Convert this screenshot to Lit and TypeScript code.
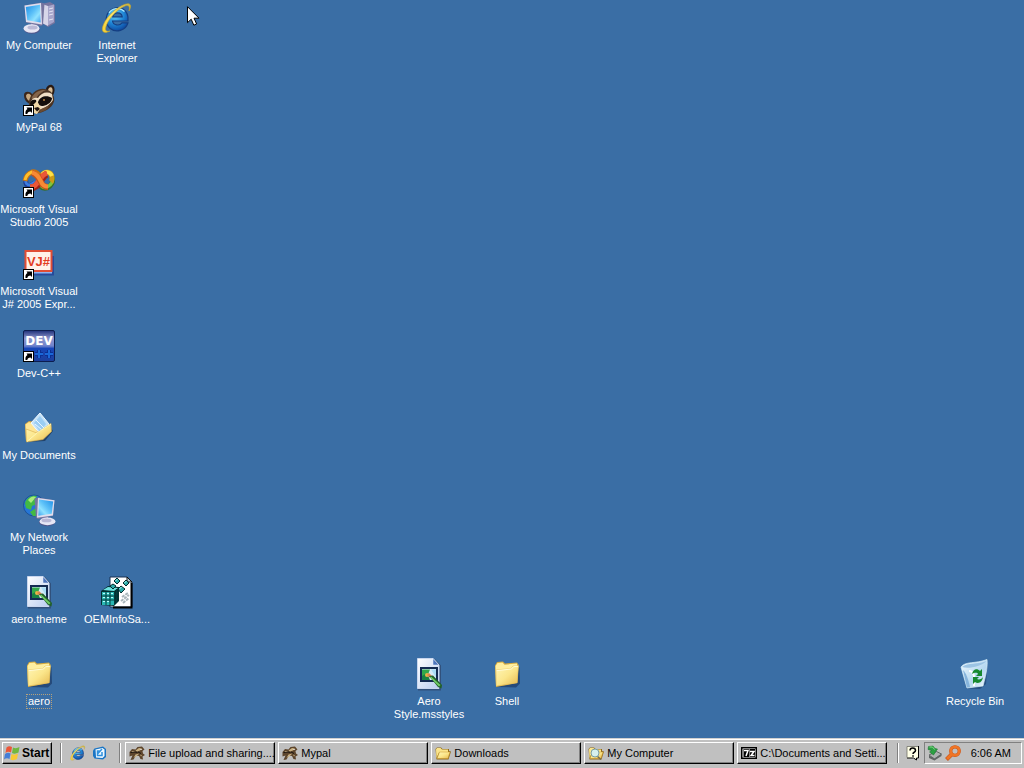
import { LitElement, html, css, svg } from "lit";
import { customElement, property } from "lit/decorators.js";
import { classMap } from "lit/directives/class-map.js";
import { styleMap } from "lit/directives/style-map.js";

const gradients = svg`
  <defs>
    <linearGradient id="screen" x1="0" y1="0" x2="1" y2="1"><stop offset="0" stop-color="#1f8fe6"/><stop offset=".45" stop-color="#5cc0f8"/><stop offset=".7" stop-color="#8fe2ff"/><stop offset="1" stop-color="#3fa2ee"/></linearGradient>
    <linearGradient id="paper" x1="0" y1="0" x2="1" y2="1"><stop offset="0" stop-color="#ffffff"/><stop offset="1" stop-color="#b9cdf0"/></linearGradient>
    <linearGradient id="fold" x1="0" y1="0" x2="1" y2="1"><stop offset="0" stop-color="#fff6b8"/><stop offset=".5" stop-color="#fbe68b"/><stop offset="1" stop-color="#e6b84e"/></linearGradient>
    <radialGradient id="ball" cx=".4" cy=".3" r=".8"><stop offset="0" stop-color="#6fd6fb"/><stop offset=".5" stop-color="#1f86d6"/><stop offset="1" stop-color="#0a3a92"/></radialGradient>
    <linearGradient id="gold" x1="0" y1="1" x2="1" y2="0"><stop offset="0" stop-color="#f6cf2e"/><stop offset=".5" stop-color="#fbe36a"/><stop offset="1" stop-color="#c9b440"/></linearGradient>
    <linearGradient id="navy" x1="0" y1="0" x2="0" y2="1"><stop offset="0" stop-color="#1d2f78"/><stop offset=".25" stop-color="#8d95cc"/><stop offset=".5" stop-color="#6f83cc"/><stop offset=".58" stop-color="#1746b8"/><stop offset="1" stop-color="#1c3f9c"/></linearGradient>
    <linearGradient id="bin" x1="0" y1="0" x2="1" y2="1"><stop offset="0" stop-color="#f2faff"/><stop offset=".6" stop-color="#b5d8f0"/><stop offset="1" stop-color="#f4faff"/></linearGradient>
  </defs>`;

const shortcut = svg`
  <rect x="0.5" y="21.5" width="10" height="10" fill="#fff" stroke="#000"/>
  <path d="M2.500 30c-.3-3 .5-4.300 2-5L3.500 23.500h5.500v5.500L7.500 27.500C5.500 27.600 4.500 28.500 4.300 30z" fill="#000"/>`;

const monitor = svg`
  <path d="M8 21l6 1 1 3-7-1z" fill="#9d9cc4"/>
  <ellipse cx="9" cy="27.500" rx="8" ry="4.300" fill="#51578c"/>
  <ellipse cx="8.500" cy="26.500" rx="8" ry="4.200" fill="#e6e6f4"/>
  <ellipse cx="9.500" cy="25.500" rx="5" ry="2" fill="#b9b8d6"/>
  <path d="M1.500 3.500L18 .500l3.500 1-1.500 21-2 1.500L3 20.500z" fill="#75749f"/>
  <path d="M1.500 3.500L18 1l1 21.500L3 20z" fill="#dedded"/>
  <path d="M2.800 5L17 2.800l.7 17.600L4.300 18.200z" fill="url(#screen)"/>`;

const computer = svg`
  <path d="M19 2l8-2 5 3v18l-7 4-6-4z" fill="#77759f"/><path d="M19 2l6 2v20l-6-3z" fill="#d7d6e9"/>
  <path d="M25 4l6-1.500V20l-6 3.500z" fill="#a8a6cb"/><path d="M26 7l4-1M26 10l4-1M26 13l4-1M26 18l4-1" stroke="#e4e4f2"/>
  ${monitor}`;

const themeFile = svg`
  <path d="M5 31.500h22V8l-6-6.500" fill="none" stroke="#31517c" stroke-width="2"/>
  <path d="M4.500.5h15.500l6 6.500v23.500H4.500z" fill="url(#paper)" stroke="#c9d6ee"/>
  <path d="M20 .5v6.500h6z" fill="#4c74bc" stroke="#e9f0fc" stroke-width=".5"/>
  <rect x="8" y="10" width="16" height="13" fill="#d5eaf6" stroke="#142b52" stroke-width="2"/>
  <path d="M9 11.500h8l-4 10H9z" fill="#32a84a"/><path d="M9 18l5-3 3 7H9z" fill="#198142"/>
  <path d="M18 11.500h5v8z" fill="#a9dcf5"/>
  <circle cx="14" cy="17" r="2" fill="#eab447"/><path d="M14 17l2-2 3 3-2 2z" fill="#e0844a"/>
  <path d="M16 18l4-.500 9 9.500-.5 3.500L25 29z" fill="#225f2b"/><path d="M18 18.500l9.500 8.500-1.500 1.500L17 19.500z" fill="#70cc65"/>`;

const folder = svg`
  <path d="M5 29l20 .5 4-4L28.500 9z" fill="#1a3863" opacity=".65"/>
  <path d="M4 7.500L6 4l6-.5 2 2L26 4.500l1.500 2-1 18.500L5 29z" fill="#d5a93e"/>
  <path d="M4.500 8L6.500 5l5-.5 2 2.200L26 5.500v13L5 28z" fill="#ffefa0"/>
  <path d="M5 12l15-1.500 2-2.500 5.500-.3-1.500 17L5.500 28z" fill="url(#fold)" stroke="#e6c464" stroke-width=".6"/>
  <path d="M5.500 12.700L20.500 11l2-2.300L27 8.300" fill="none" stroke="#fffbd7"/>`;

const smallFolder = svg`
  <path d="M1 8l3-3h8l3 3h13v4l4 1-5 16H3z" fill="#8f6a1c"/>
  <path d="M2 9l2-3h7l3 3h12v6H8L3 26z" fill="#fbe58c"/>
  <path d="M9 14h21l-4 13H4z" fill="url(#fold)" stroke="#c9962c"/>`;

const explorer = svg`
  <path d="M27 19H11.500c.6 4.200 7 5.500 9.500 1.800h6C24.500 29 15 31 9.200 26.500 3 21.500 4.200 11 11 7.200 19 2.800 28 8 27 19zM11.700 14.800h9.500c-.4-5-8.500-5.500-9.500 0z" fill="url(#ball)" fill-rule="evenodd" stroke="#153f83" stroke-width="1.200"/>
  <path d="M8 11c3-5 11-6 15.500-1.500" fill="none" stroke="#a9ebff" stroke-width="1.300"/>
  <path d="M28 9C31.500 3 29 .500 24 2.300 16 5 6 14 2.500 22.500c-3 7 0 10 6.500 6.500-4.500 1-5.500-1-3.500-6C8.500 15 18 6 24.500 3.800c3.500-1 4.500 1 3.500 5.200z" fill="url(#gold)" stroke="#c4a32a" stroke-width=".6"/>`;

const raccoon = svg`
  <path d="M23 8C22 3 26 0 29 1c4 2 3 9-1 13z" fill="#2a1a12"/><path d="M25 7c0-3 2-4.500 3.500-3.500S30 8 28 11z" fill="#d6bc95"/>
  <path d="M1 11c0-4 6-4 8-1l4 6-5 4C3 19 1 15 1 11z" fill="#3a261b"/><path d="M3 11.500c1-2.500 4-2 5 0l2 4-3 2c-2-1-4-3-4-6z" fill="#c8a980"/>
  <path d="M6 17C8 8 16 2.500 24 5.500c5 2 8 7 7 12-2 7-10 11-18 12C8 29 5 23 6 17z" fill="#4b3424"/>
  <path d="M9 13c3-5 8-7.500 14-7-4 1.500-7 4-9 7l-3 4c-2-1-3-2-2-4z" fill="#84644a"/>
  <path d="M8 17c2-3 4-4 7-3 3-5 9-7 14-4l1 6c-4 6-10 10-17 10-4-2-6-5-5-9z" fill="#f0dfc6"/>
  <path d="M15 18c2-6 9-7.500 14-4 0 4-4 7-9 8-3 0-5-1-5-4zM7 19c1-3 3-4 6-3l1 4-3 4c-3-1-4-3-4-5z" fill="#140e0c"/>
  <circle cx="21" cy="16" r="1" fill="#b98342"/><path d="M9 22l5-5 4 7-4 6c-4 0-6-4-5-8z" fill="#efd6a5"/>
  <path d="M11 24l4-1 2 2-3 2.500z" fill="#201410"/><path d="M18 25l9-4-4 5-7 3z" fill="#6a4a30"/>`;

const studio = svg`
  <g fill="none" stroke-linecap="butt">
    <path d="M29 11c2 5-1 9-5 11-3 1-5 0-7-2" stroke="#356e2c" stroke-width="5"/><path d="M29 10c2 5-1 9-5 11-3 1-5 0-6-2" stroke="#7fc43b" stroke-width="3.500"/>
    <path d="M3 14c-1 4 1 6 4 6l5-3" stroke="#1f3c94" stroke-width="5"/><path d="M3 14c-1 3 1 5 4 5l5-3" stroke="#3d7ce0" stroke-width="3"/>
    <path d="M19 9c3-4 9-4 10 2 0 2 0 4-1 5" stroke="#cd9a17" stroke-width="5"/><path d="M19 9c3-4 8-4 10 1" stroke="#ffe047" stroke-width="4"/>
    <path d="M2 15c1-5 4-8 7-9 4-1 6 1 8 5" stroke="#c67212" stroke-width="5"/><path d="M2 14c1-5 4-7 7-8 3 0 5 1 7 4" stroke="#ffbf2b" stroke-width="3"/>
    <path d="M7 22c6 0 8-4 11-8 2-3 3-5 6-6" stroke="#a32218" stroke-width="7"/><path d="M7 21c6 0 7-4 10-8 2-3 4-5 7-6" stroke="#ea5738" stroke-width="5"/>
    <path d="M9 7c5 1 7 5 9 9 1 3 4 5 7 5" stroke="#c4521a" stroke-width="6"/><path d="M9 6.500c5 1 7 5 9 9 1 3 4 5 7 5" stroke="#f88a35" stroke-width="4"/>
  </g>`;

const vj = svg`
  <path d="M4 22h25v5H10z" fill="#8fb2ee"/><path d="M9 26.500h21V8" fill="none" stroke="#254a9c" stroke-width="2"/>
  <rect x="2.500" y="3" width="26" height="20" fill="#fff1ea" stroke="#e14d35" stroke-width="2"/>
  <text x="15.500" y="18" text-anchor="middle" font-family="Liberation Sans, sans-serif" font-weight="bold" font-size="13" fill="#e33b22">VJ#</text>`;

const dev = svg`
  <rect x=".5" y=".5" width="31" height="31" rx="1.500" fill="url(#navy)" stroke="#0c1d4f"/>
  <text x="16" y="15" text-anchor="middle" font-family="DejaVu Sans, sans-serif" font-weight="bold" font-size="12" fill="#fff">DEV</text>
  <path d="M12 24h8M16 20v8M22 24h8M26 20v8" stroke="#0b2f92" stroke-width="4"/><path d="M12 24h8M16 20v8M22 24h8M26 20v8" stroke="#1a68d8" stroke-width="2"/>`;

const documents = svg`
  <path d="M4 30l18-1 8-10-2-3z" fill="#173055" opacity=".7"/>
  <path d="M2 12l4-3 6 1 14 2 1 7L3 29z" fill="#dca942"/><path d="M2.500 12.500L6 10l7 3 2 15-12 1z" fill="#ffe694"/>
  <path d="M8 11L17 1l9 11-8 11z" fill="#c5e3f9" stroke="#f1faff"/><path d="M11 11l6-7 6 8-6 8z" fill="#9bcdf3"/><path d="M13 8l8 8M12 12l7 6" stroke="#eaf6ff"/>
  <path d="M3 17l11 4L28 11.500l.5 8-8.500 8L3.500 30z" fill="url(#fold)" stroke="#d6ad4a" stroke-width=".6"/><path d="M4 29.500L14 21l14-9" fill="none" stroke="#fff5b5"/>`;

const network = svg`
  <circle cx="11" cy="11.500" r="10.500" fill="#2676d6" stroke="#174384" stroke-width=".7"/>
  <path d="M2 9C4 3 9 1 14 2l-2 4 2 4-5 2-1 4-5-2zM7 18l6-4 4 3-2 5-5 0z" fill="#42b944"/><path d="M5 6c3-4 6-4 8-3L8 9z" fill="#a9eb7b"/>
  <g transform="translate(33 3) scale(-1 .92)">${monitor}</g>`;

const registry = svg`
  <path d="M9 1h17l5 5v25H9z" fill="#fff" stroke="#173052"/><path d="M26 1v5h5z" fill="#b8cedb" stroke="#111"/><path d="M30.500 7v24.500H12" fill="none" stroke="#000" stroke-width="2"/>
  <path d="M20 25l8-6M22 27l6-5M21 21l6-4" stroke="#aab6bb" stroke-width="2" stroke-dasharray="3 1"/>
  <path d="M0 15l7-5 11 1v14l-5 5-13-1z" fill="#032f32"/><path d="M2 14l5-3 10 1-4 3z" fill="#6ce2df"/><path d="M1 16h12v13H1z" fill="#2ab7b4"/>
  <path d="M5 16v13M9 16v13M1 20h12M1 24h12M13.500 15v14M15.500 13v14M13 20l5-4M13 25l5-4" stroke="#043b3d"/>
  <path d="M2 17.500h2M6 17.500h2M10 17.500h2M2 21.500h2M6 21.500h2M10 21.500h2M2 25.500h2M6 25.500h2" stroke="#baffff"/>
  <g fill="#2baaa9" stroke="#022a2c"><path d="M13 5l3-3 3 3-3 3zM22 7l3-3 3 3-3 3zM17 13l3-3 4 3-4 4zM9 10l3-2 3 2-3 3z"/></g><path d="M14.500 5l2-2M23.500 7l2-2M18.500 13l2-2" stroke="#a8fff8"/>`;

const recycle = svg`
  <path d="M8 30.500l13 .5 6-5 1.500-20z" fill="#193e6c" opacity=".6"/>
  <path d="M2 9C6 3 17 6 28 1.500 29 10 26 20 24 28L8 30C6 23 4 16 2 9z" fill="url(#bin)" stroke="#d9effb" stroke-width=".7"/>
  <path d="M3 9C9 4 18 7 27.500 3 22 9 9 11 3 9z" fill="#9cc4e4"/>
  <path d="M4 12c3 3 5 8 7 17l-3 .5z" fill="#86b4dc"/><path d="M10 13c5 0 6 6 5 15" fill="none" stroke="#fff" stroke-width="2"/>
  <path d="M13 16c1-5 5-6 8-3l2-2v7h-6l2-2c-1-2-4-1-6 0zM24 19c-1 6-5 7-8 5l-2 2v-7h6l-2 2c2 1 5 0 6-2z" fill="#17892f"/>`;

const page = svg`
  <path d="M5 7l17-4 6 5v16l-6 5-17-2-3-5V11z" fill="#1b75c4"/><path d="M7 9l14-3 4 3v13l-4 4-13-1z" fill="#eff9ff"/>
  <path d="M20 8l-9 10M20 14v7h-9v-9h4" fill="none" stroke="#2f91df" stroke-width="3"/>`;

const search = svg`${smallFolder}<path d="M18 22l8 7" stroke="#756c4d" stroke-width="3"/><circle cx="14" cy="16" r="8" fill="#d6f0ed" stroke="#7a9ea3" stroke-width="2"/>`;

const badger = svg`
  <path d="M1 14l5-6 7 1L17 4l9-1 5 6-4 3 1 5 4 3-5 3 1 6-5-1-3-6-6-1-5 8-6 1 4-9-6 2z" fill="#5d452c"/>
  <path d="M13 11l7-5 6 1-4 4-6 2zM5 12l8 0-6 3zM9 26l4-7 8-2-7 6zM22 19l4 2-2 2z" fill="#cbb283"/><path d="M3 15l9-1 5 1M18 14l6 3" fill="none" stroke="#1b140f" stroke-width="2"/><path d="M22 8l5 0-3 2z" fill="#fff"/>`;

const archive = svg`
  <path d="M0 4h32v24H0z" fill="#000"/><path d="M3 7h26v18H3z" fill="#fff"/><path d="M5 8h11v16H5zM17 8h11v16H17z" fill="#000"/><path d="M6 11h8l-4 11" fill="none" stroke="#fff" stroke-width="3"/><path d="M18 13h8l-6 8h7" fill="none" stroke="#fff" stroke-width="3"/>`;

const flag = svg`
  <path d="M5 5q5-4 11-1l-2 11q-6-3-11 1z" fill="#ec5537"/><path d="M18 5q6 3 13-1l-2 11q-7 4-13 1z" fill="#70b83e"/>
  <path d="M2 18q6-4 11-1l-2 11q-6-3-11 1z" fill="#447ed7"/><path d="M15 18q6 3 13-1l-2 11q-7 4-13 1z" fill="#f7c934"/>`;

const help = svg`
  <path d="M4 3h23v23h-4v4l-6-4H4z" fill="#ffffe6"/><path d="M4 25V3h22" fill="none" stroke="#6b6b62" stroke-width="1.500"/><path d="M27 2v24h-4v4l-6-4H4" fill="none" stroke="#000" stroke-width="2"/>
  <path d="M10 11c0-7 11-7 11 0 0 4-5 3-5 7" fill="none" stroke="#000" stroke-width="3"/><path d="M14.500 20.500h3v3h-3z"/>`;

const eject = svg`
  <path d="M4 20l15-7 10 5-14 10z" fill="#aeb2b2" stroke="#4a4e4e" stroke-width="1.500"/><path d="M4 21v5l11 5 14-9v-4L15 27z" fill="#606565"/>
  <path d="M3 3l9-1 4 5 5 1-8 12-8-6 4-3-7-2z" fill="#2ca043" stroke="#176b2b"/><path d="M5 4l6 0 4 5" fill="none" stroke="#83dd87" stroke-width="2"/>`;

const key = svg`
  <circle cx="20" cy="12" r="8.500" fill="none" stroke="#c4531a" stroke-width="6.500"/><path d="M14 18L3 29" stroke="#c4531a" stroke-width="8"/>
  <circle cx="20" cy="12" r="8.500" fill="none" stroke="#f07526" stroke-width="5"/><path d="M14 18L4 28" stroke="#f07526" stroke-width="6"/>`;

const pointer = svg`<path d="M1.500 1.700v16l3.700-3.500 2.600 6 2.800-1.200-2.600-5.800h5z" fill="#fff" stroke="#000"/>`;

const icons: Record<string, unknown> = {
  computer, explorer, raccoon, studio, vj, dev, documents, network, theme: themeFile, registry, folder, recycle,
  smallFolder, page, search, badger, archive, flag, help, eject, key,
};

@customElement("shell-icon")
class ShellIcon extends LitElement {
  static styles = css`
    :host { display: block; flex: none; width: 32px; height: 32px; }
    :host([small]) { width: 16px; height: 16px; }
    svg { display: block; width: 100%; height: 100%; overflow: visible; }
  `;
  @property() name = "";
  @property({ type: Boolean, reflect: true }) small = false;
  @property({ type: Boolean }) link = false;
  render() {
    return html`<svg viewBox="0 0 32 32" aria-hidden="true">${gradients}${icons[this.name]}${this.link ? shortcut : ""}</svg>`;
  }
}

interface Item { icon: string; lines: string[]; col: number; row: number; link?: boolean; focused?: boolean }

const items: Item[] = [
  { icon: "computer", lines: ["My Computer"], col: 1, row: 1 },
  { icon: "explorer", lines: ["Internet", "Explorer"], col: 2, row: 1 },
  { icon: "raccoon", lines: ["MyPal 68"], col: 1, row: 2, link: true },
  { icon: "studio", lines: ["Microsoft Visual", "Studio 2005"], col: 1, row: 3, link: true },
  { icon: "vj", lines: ["Microsoft Visual", "J# 2005 Expr..."], col: 1, row: 4, link: true },
  { icon: "dev", lines: ["Dev-C++"], col: 1, row: 5, link: true },
  { icon: "documents", lines: ["My Documents"], col: 1, row: 6 },
  { icon: "network", lines: ["My Network", "Places"], col: 1, row: 7 },
  { icon: "theme", lines: ["aero.theme"], col: 1, row: 8 },
  { icon: "registry", lines: ["OEMInfoSa..."], col: 2, row: 8 },
  { icon: "folder", lines: ["aero"], col: 1, row: 9, focused: true },
  { icon: "theme", lines: ["Aero", "Style.msstyles"], col: 6, row: 9 },
  { icon: "folder", lines: ["Shell"], col: 7, row: 9 },
  { icon: "recycle", lines: ["Recycle Bin"], col: 13, row: 9 },
];

const tasks = [
  { icon: "badger", title: "File upload and sharing...." },
  { icon: "badger", title: "Mypal" },
  { icon: "smallFolder", title: "Downloads" },
  { icon: "search", title: "My Computer" },
  { icon: "archive", title: "C:\\Documents and Setti..." },
];

@customElement("app-root")
class AppRoot extends LitElement {
  static styles = css`
    :host {
      display: flex; flex-direction: column; height: 100vh; overflow: hidden; position: relative;
      background: #3a6ea5; font: 11px/13px "Liberation Sans", Arial, sans-serif; color: #000;
    }
    button { font: inherit; color: inherit; margin: 0; padding: 0; border: 0; background: none; }
    .desktop {
      flex: 1; min-height: 0; display: grid; align-content: start;
      grid-template-columns: repeat(auto-fill, 78px); grid-auto-rows: 82px;
    }
    .item { display: flex; flex-direction: column; align-items: center; gap: 4px; padding-top: 2px; color: #fff; white-space: nowrap; }
    .label { display: block; padding: 0 1px; border: 1px solid transparent; }
    .line { display: block; }
    .focused { border: 1px dotted #b5a27c; }
    .taskbar {
      display: flex; align-items: center; gap: 3px; padding: 3px 2px 4px;
      background: #c0c0c0; border-top: 1px solid #d0d0d0; box-shadow: inset 0 1px #fff;
    }
    .start, .task {
      display: flex; align-items: center; height: 22px; box-sizing: border-box; background: #c0c0c0;
      border: 1px solid; border-color: #fff #000 #000 #fff; box-shadow: inset -1px -1px #808080; white-space: nowrap;
    }
    .start { gap: 2px; padding: 0 2px 0 1px; font-weight: bold; font-size: 12px; }
    .groove { width: 1px; height: 20px; background: #808080; border-right: 1px solid #fff; margin: 0 1px 0 5px; }
    .quick { display: flex; gap: 6px; padding: 0 3px 0 4px; }
    .tasks { flex: 1; min-width: 0; display: flex; gap: 3px; }
    .task { flex: 0 1 150px; min-width: 0; gap: 3px; padding: 0 0 0 3px; }
    .title { flex: none; }
    .help { padding-left: 2px; }
    .tray { display: flex; align-items: center; height: 22px; box-sizing: border-box; gap: 2px; padding: 0 10px 0 2px; border: 1px solid; border-color: #808080 #fff #fff #808080; }
    .clock { padding-left: 8px; white-space: nowrap; }
    .pointer { position: absolute; width: 14px; height: 21px; pointer-events: none; }
  `;

  render() {
    return html`
      <main class="desktop">
        ${items.map((i) => html`
          <button class="item" style=${styleMap({ gridColumn: String(i.col), gridRow: String(i.row) })}>
            <shell-icon name=${i.icon} ?link=${i.link}></shell-icon>
            <span class=${classMap({ label: true, focused: !!i.focused })}>${i.lines.map((l) => html`<span class="line">${l}</span>`)}</span>
          </button>`)}
      </main>
      <footer class="taskbar">
        <button class="start"><shell-icon small name="flag"></shell-icon>Start</button>
        <span class="groove"></span>
        <div class="quick">
          <button aria-label="Internet Explorer"><shell-icon small name="explorer"></shell-icon></button>
          <button aria-label="Show Desktop"><shell-icon small name="page"></shell-icon></button>
        </div>
        <span class="groove"></span>
        <nav class="tasks">
          ${tasks.map((t) => html`<button class="task"><shell-icon small name=${t.icon}></shell-icon><span class="title">${t.title}</span></button>`)}
        </nav>
        <span class="groove"></span>
        <button class="help" aria-label="Help"><shell-icon small name="help"></shell-icon></button>
        <div class="tray">
          <shell-icon small name="eject"></shell-icon>
          <shell-icon small name="key"></shell-icon>
          <time class="clock">6:06 AM</time>
        </div>
      </footer>
      <svg class="pointer" style=${styleMap({ left: "186px", top: "5px" })} viewBox="0 0 14 21" aria-hidden="true">${pointer}</svg>
    `;
  }
}
